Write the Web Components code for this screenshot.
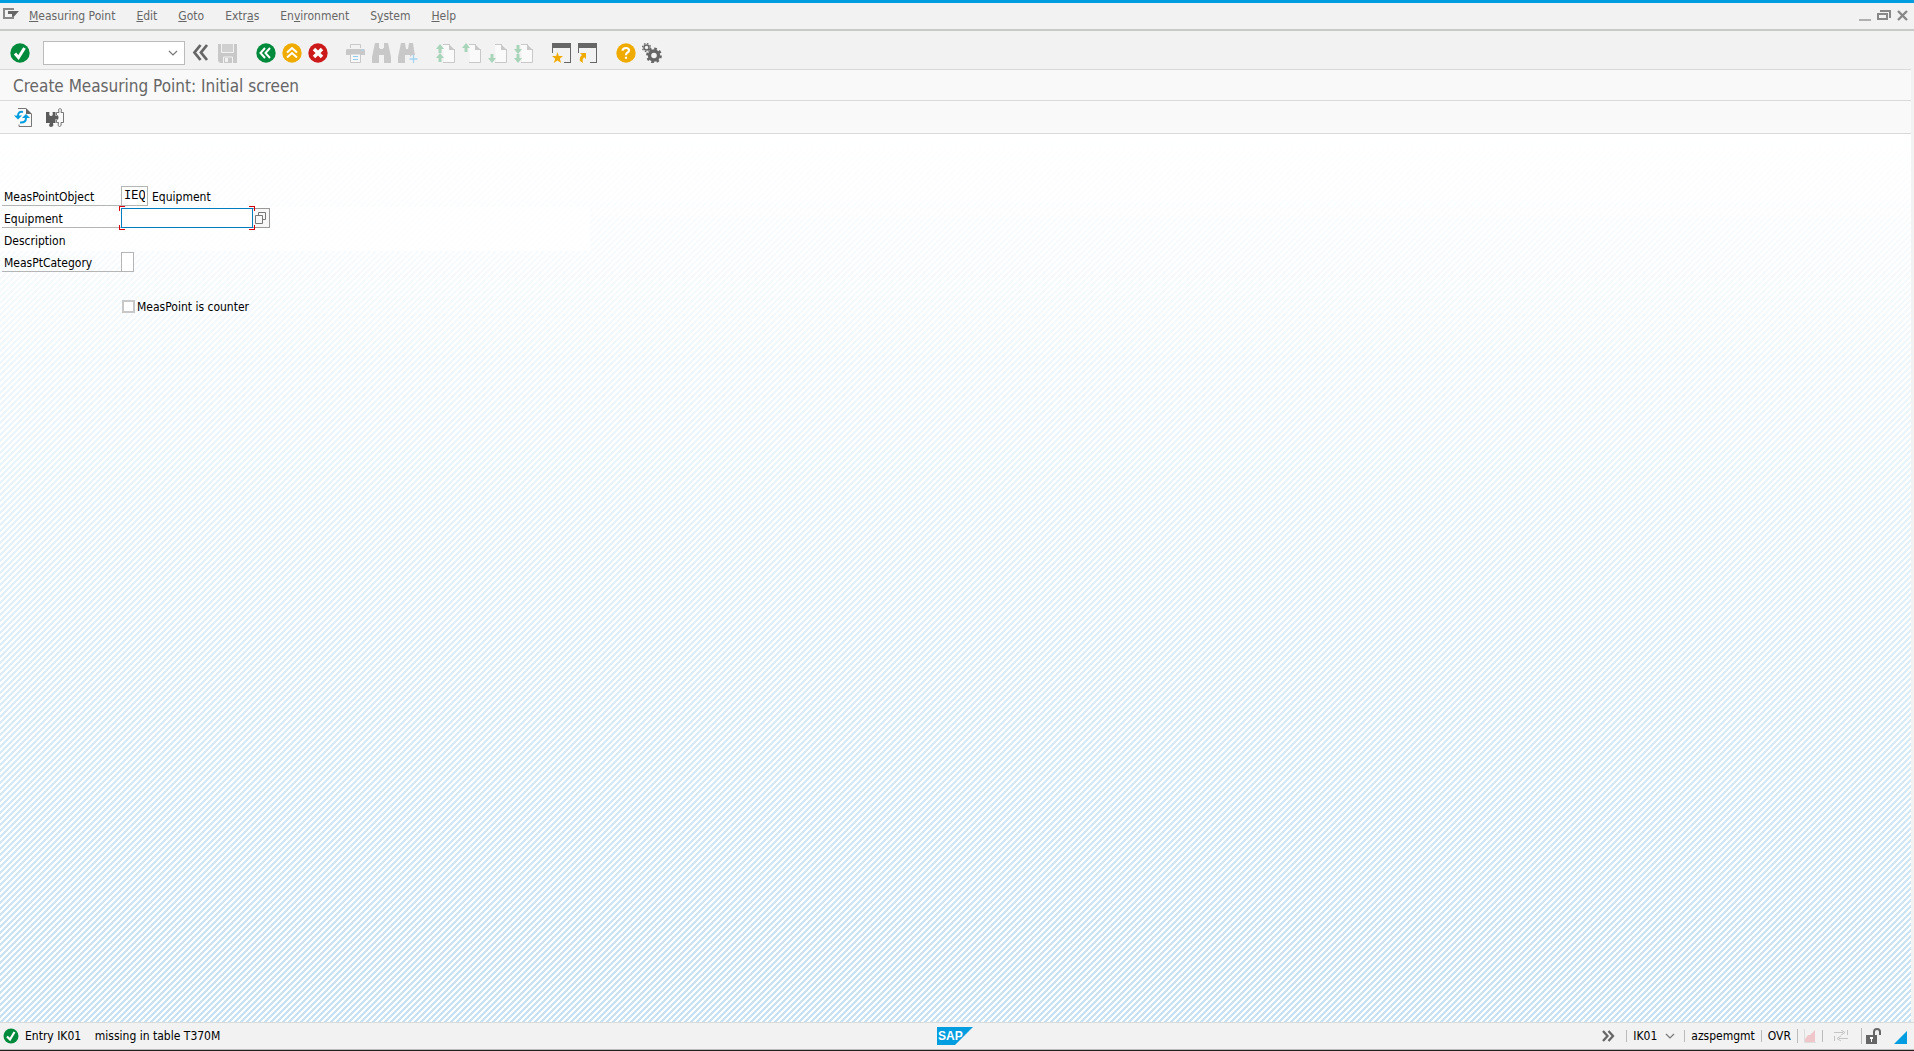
<!DOCTYPE html>
<html lang="en">
<head>
<meta charset="utf-8">
<title>Create Measuring Point: Initial screen</title>
<style>
	html, body { margin: 0; height: 100%; }
	body {
		font: 12px/16px "DejaVu Sans Condensed", Tahoma, sans-serif;
		color: #000;
		background: #f0f0f0;
	}
</style>
</head>
<body>
<gui-window>
	<menu-bar slot="menu">
		<menu-entry><u>M</u>easuring Point</menu-entry>
		<menu-entry><u>E</u>dit</menu-entry>
		<menu-entry><u>G</u>oto</menu-entry>
		<menu-entry>Extr<u>a</u>s</menu-entry>
		<menu-entry>En<u>v</u>ironment</menu-entry>
		<menu-entry>S<u>y</u>stem</menu-entry>
		<menu-entry><u>H</u>elp</menu-entry>
	</menu-bar>
	<system-toolbar slot="toolbar"></system-toolbar>
	<screen-title slot="toolbar">Create Measuring Point: Initial screen</screen-title>
	<app-toolbar slot="toolbar">
		<icon-button icon="refresh" label="Refresh"></icon-button>
		<icon-button icon="puzzle" label="Class assignment"></icon-button>
	</app-toolbar>
	<point-form></point-form>
	<status-bar slot="status">Entry IK01    missing in table T370M</status-bar>
</gui-window>

<script>
const page = (left, top) => `
	<path d="M${left} ${top}H14L19 6V19.500H${left + 1}" fill="#fafafa" stroke="none"/>
	<path d="M${left} 1.500H14M18.500 6V19.500H${left}" fill="none" stroke="#c8c8c8"/>
	<path d="M13 1L19 7H13z" fill="#c8c8c8"/>`;
const up = (x, y) => `<path d="M${x} ${y}l4 5h-2.500v4h-3v-4H${x - 4}z" fill="#a8d5ba"/>`;
const down = (x, y) => `<path d="M${x} ${y}l4-5h-2.500v-4h-3v4H${x - 4}z" fill="#a8d5ba"/>`;
const windowShape = `<path d="M0 0H19V20H12V19H18V5H1V10H0z" fill="#666"/>`;

// name: [width, height, markup]
const ICONS = {
	ok: [20, 20, `<circle cx="10" cy="10" r="9.700" fill="#008a3b"/>
		<path d="M5 10.500l3.500 4L14.500 5" fill="none" stroke="#fff" stroke-width="3"/>`],
	okSmall: [16, 16, `<circle cx="8" cy="8" r="7.500" fill="#008a3b"/>
		<path d="M4 8.500l3 3L11.500 4" fill="none" stroke="#fff" stroke-width="2.200"/>`],
	collapse: [20, 20, `<path d="M8.500 2L2.500 9.500L8.500 17M15 2L9 9.500L15 17" fill="none" stroke="#666" stroke-width="2.800"/>`],
	save: [20, 20, `<path d="M0 1H19V20H2L0 18z" fill="#c8c8c8"/><path d="M4 1H15V9H4z" fill="#d0d0d0"/>
		<path d="M3.500 1V9.500H15.500V1M5.500 20v-6h9v6" fill="none" stroke="#f2f2f2"/><path d="M7 15h3v4H7z" fill="#f2f2f2"/>`],
	back: [20, 20, `<circle cx="10" cy="10" r="9.700" fill="#008a3b"/>
		<path d="M9 5L4.500 10l4.500 5M14 5L9.500 10l4.500 5" fill="none" stroke="#fff" stroke-width="2"/>`],
	exit: [20, 20, `<circle cx="10" cy="10" r="9.700" fill="#f0ab00"/>
		<path d="M5 9.500L10 5l5 4.500M5 14.500L10 10l5 4.500" fill="none" stroke="#fff" stroke-width="2"/>`],
	cancel: [20, 20, `<circle cx="10" cy="10" r="9.700" fill="#cc1919"/>
		<path d="M6 6l8 8M14 6l-8 8" fill="none" stroke="#fff" stroke-width="3.500"/>`],
	print: [20, 20, `<path d="M4.500 5V1.500h10V5" fill="none" stroke="#c8c8c8"/><path d="M1 6h17l1 1v5H0V7z" fill="#c8c8c8"/>
		<path d="M15 7h3" stroke="#a9d5ee"/><path d="M4.500 11v8.500h10V11z" fill="#f7f7f7" stroke="#c8c8c8"/>
		<path d="M7 13.500h5M7 16.500h5" stroke="#8fcdf0"/>`],
	find: [20, 20, `<path d="M3 0h4l1 6h3l1-6h4l3 14v6H12v-8H7v8H0v-6z" fill="#c8c8c8"/>
		<path d="M7.500 5V0M11.500 5V0" stroke="#f2f2f2"/>`],
	findNext: [20, 20, `<path d="M3 0h4l1 6h2l1-6h4l1 7 1 5h-3l-2 2v-2H7v8H0v-6z" fill="#c8c8c8"/>
		<path d="M15.500 12v8M11.500 16h8" stroke="#a2d5f2" stroke-width="1.300"/>`],
	firstPage: [20, 20, page(7, 1) + up(4, 1) + up(4, 10)],
	prevPage: [20, 20, page(7, 1) + up(4, 0)],
	nextPage: [20, 20, page(7, 1) + down(4, 20)],
	lastPage: [20, 20, page(7, 1) + down(4, 11) + down(4, 20)],
	newSession: [20, 20, windowShape + `<path d="M5.500 9l1.300 4H11l-3.200 2.700L9.200 20l-3.700-2.600L1.700 20l1.500-4.300L0 13h4.200z" fill="#f0ab00"/>`],
	shortcut: [20, 20, windowShape + `<path d="M2 10h6v6L6.200 14.200Q4 16 5 20L2 18Q1 14.500 4 12z" fill="#f0ab00"/>`],
	help: [20, 20, `<circle cx="10" cy="10" r="9.700" fill="#f0ab00"/>
		<path d="M6.500 7.700Q6.800 5 10 5q3 0 3 2.500 0 1.300-1.800 2.300Q10 10.500 10 12.300M10 13.700v2" fill="none" stroke="#fff" stroke-width="2.200"/>`],
	gear: [20, 20, `<circle cx="12" cy="12.500" r="4.500" fill="none" stroke="#666" stroke-width="3.400"/>
		<circle cx="12" cy="12.500" r="6.800" fill="none" stroke="#666" stroke-width="2.200" stroke-dasharray="2.670"/>
		<circle cx="4.500" cy="4.500" r="2.500" fill="none" stroke="#666" stroke-width="1.500"/>
		<circle cx="4.500" cy="4.500" r="4" fill="none" stroke="#666" stroke-width="1.200" stroke-dasharray="1.570"/>`],
	refresh: [20, 20, `<path d="M4 1.500h8M17.500 7v12.500H5v-2" fill="none" stroke="#777"/><path d="M12 1l6 6h-6z" fill="#666"/>
		<path d="M9 5Q4 4 4 9M6 15.500Q12 16 12 11" fill="none" stroke="#009de0" stroke-width="2"/>
		<path d="M0 8.500h8L4 12.500zM8 11h8L12 7z" fill="#009de0"/>`],
	puzzle: [20, 20, `<path d="M0 5h3.500q-1 4 1.500 4t1.500-4H9.500v4q3-2 3 1.500T9.500 12v4H7q0 1 .5 2-.5 2-2.500 2t-2-2l1-2H0z" fill="#5c5c5c"/>
		<path d="M10.500 8V5.500h2.500Q11.500 1.500 14 1.500T15 5.500h2.500v10H15q1 4-1.500 4t-1-4H10.500V13" fill="none" stroke="#777"/>`],
	menu: [16, 18, `<path d="M0 1H11V3H2V10H9V8H11V12H0z" fill="#888"/><path d="M5 4H16L11 9.500H9V7H5z" fill="#666"/>`],
	minimize: [12, 12, `<path d="M0 10h12" stroke="#b0b0b0" stroke-width="2"/>`],
	restore: [14, 12, `<path d="M1 4h9v5H1zM3 1h10v7" fill="none" stroke="#888" stroke-width="2"/>`],
	close: [12, 12, `<path d="M1 1l9 9M10 1l-9 9" stroke="#888" stroke-width="2.400"/>`],
	chevron: [10, 8, `<path d="M1 2l4 4 4-4" fill="none" stroke="#777" stroke-width="1.200"/>`],
	match: [12, 12, `<path d="M.5 3.500h7v8h-7zM3.500 3V.5h7v7H8" fill="none" stroke="#777"/>`],
	expand: [14, 12, `<path d="M1 1l4.500 5L1 11M6.500 1L11 6l-4.500 5" fill="none" stroke="#666" stroke-width="2.300"/>`],
	load: [12, 14, `<path d="M.5 0v13.500H12" fill="none" stroke="#ddd"/><path d="M1 10L4 6h2l5-5v12H1z" fill="#efc7ca"/>`],
	transfer: [16, 12, `<path d="M1 2.500h9M15 8.500H6M14.500 0v5M1.500 6v5" fill="none" stroke="#c4c4c4"/>
		<path d="M8 0l4 2.500L8 5M8 6L4 8.500 8 11" fill="none" stroke="#c4c4c4"/>`],
	lock: [16, 16, `<path d="M0 7h11v9H0z" fill="#666"/><path d="M8 7V4Q8 1 11 1t3 3v3" fill="none" stroke="#666" stroke-width="2"/>
		<path d="M4 9h3v2H6v3H5v-3H4z" fill="#fff"/>`],
	grip: [13, 13, `<path d="M13 0V13H0z" fill="#009de0"/>`],
	sap: [36, 18, `<path d="M0 0H36L18 18H0z" fill="#009de0"/>
		<text x="1" y="13" font-family="Liberation Sans, Arial, sans-serif" font-weight="bold" font-size="12" fill="#fff">SAP</text>`],
};

const svg = name => {
	const [w, h, body] = ICONS[name];
	return `<svg width="${w}" height="${h}" viewBox="0 0 ${w} ${h}" aria-hidden="true">${body}</svg>`;
};

const define = (tag, render) => customElements.define(tag, class extends HTMLElement {
	constructor() {
		super();
		this.attachShadow({ mode: "open" });
	}

	connectedCallback() {
		this.shadowRoot.innerHTML = render(this);
	}
});

define("icon-button", el => `
	<style>
		:host { display: block; }
		button { display: block; padding: 0; border: 0; background: none; }
		svg { display: block; }
	</style>
	<button type="button" aria-label="${el.getAttribute("label")}">${svg(el.getAttribute("icon"))}</button>
`);

define("gui-window", () => `
	<style>
		:host {
			display: flex;
			flex-direction: column;
			box-sizing: border-box;
			min-height: 100vh;
			border-top: 3px solid #009de0;
			border-bottom: 1px solid #222;
			background: #f2f2f2;
		}
		.work {
			flex: 1;
			display: flex;
			flex-direction: column;
			margin-right: 3px;
		}
		main {
			flex: 1;
			background:
				linear-gradient(#fff, rgba(255, 255, 255, 0)),
				linear-gradient(135deg, #c5e1f3 25%, #fff 25% 50%, #c5e1f3 50% 75%, #fff 75%) 0 0 / 6px 6px;
		}
	</style>
	<slot name="menu"></slot>
	<div class="work">
		<slot name="toolbar"></slot>
		<main><slot></slot></main>
	</div>
	<slot name="status"></slot>
`);

define("menu-entry", () => `
	<style>
		:host { display: block; }
		button { padding: 0; border: 0; background: none; font: inherit; color: #666; }
	</style>
	<button type="button"><slot></slot></button>
`);

define("menu-bar", () => `
	<style>
		:host {
			display: flex;
			align-items: center;
			height: 26px;
			padding: 0 5px 0 3px;
			border-bottom: 2px solid #c8cac8;
		}
		nav { flex: 1; display: flex; gap: 21px; margin-left: 10px; }
		.controls { display: flex; gap: 6px; }
	</style>
	<icon-button icon="menu" label="Menu"></icon-button>
	<nav><slot></slot></nav>
	<div class="controls">
		<icon-button icon="minimize" label="Minimize"></icon-button>
		<icon-button icon="restore" label="Restore"></icon-button>
		<icon-button icon="close" label="Close"></icon-button>
	</div>
`);

const group = items => `<div class="group">${items.map(([icon, label]) =>
	`<icon-button icon="${icon}" label="${label}"></icon-button>`).join("")}</div>`;

define("system-toolbar", () => `
	<style>
		:host {
			display: flex;
			align-items: center;
			gap: 18px;
			height: 32px;
			padding: 6px 10px 0;
			border-bottom: 1px solid #dadada;
		}
		.group { display: flex; align-items: center; gap: 6px; }
		.command {
			display: flex;
			align-items: center;
			box-sizing: border-box;
			width: 142px;
			height: 24px;
			margin: 0 1px 0 7px;
			padding-right: 6px;
			border: 1px solid #bbb;
			background: #fff;
		}
		input { flex: 1; min-width: 0; border: 0; padding: 0 4px; background: none; font: inherit; outline: 0; }
	</style>
	<div class="group">
		<icon-button icon="ok" label="Enter"></icon-button>
		<div class="command">
			<input type="text" aria-label="Command">
			<icon-button icon="chevron" label="Command history"></icon-button>
		</div>
		<icon-button icon="collapse" label="Hide command field"></icon-button>
		<icon-button icon="save" label="Save"></icon-button>
	</div>
	${group([["back", "Back"], ["exit", "Exit"], ["cancel", "Cancel"]])}
	${group([["print", "Print"], ["find", "Find"], ["findNext", "Find next"]])}
	${group([["firstPage", "First page"], ["prevPage", "Previous page"], ["nextPage", "Next page"], ["lastPage", "Last page"]])}
	${group([["newSession", "New session"], ["shortcut", "Create shortcut"]])}
	${group([["help", "Help"], ["gear", "Customize layout"]])}
`);

define("screen-title", () => `
	<style>
		:host { display: block; padding: 4px 13px 2px; border-bottom: 1px solid #dadada; background: #f9f9f9; }
		h1 { margin: 0; font-size: 17px; line-height: 24px; font-weight: normal; color: #666; }
	</style>
	<h1><slot></slot></h1>
`);

define("app-toolbar", () => `
	<style>
		:host {
			display: flex;
			align-items: center;
			gap: 12px;
			height: 32px;
			padding: 0 14px;
			border-bottom: 1px solid #dadada;
			background: #f9f9f9;
		}
	</style>
	<slot></slot>
`);

define("point-form", () => `
	<style>
		:host { display: block; padding-top: 51px; }
		.row { display: flex; align-items: center; height: 22px; padding-left: 2px; }
		.label {
			box-sizing: border-box;
			width: 119px;
			height: 20px;
			padding: 3px 2px 0;
			border-bottom: 1px solid #b5b5b5;
		}
		.text { padding-top: 2px; }
		.plain { border-color: transparent; }
		.soft { max-width: 588px; background: rgba(255, 255, 255, .7); }
		input[type="text"] {
			box-sizing: border-box;
			height: 20px;
			border: 1px solid #b5b5b5;
			padding: 0 2px;
			background: #fff;
			font: 12px/16px "Liberation Mono", "Courier New", monospace;
			outline: 0;
		}
		.type { width: 27px; margin-right: 4px; }
		.category { width: 13px; }
		.focus { position: relative; display: flex; }
		.focus input { width: 132px; border-color: #007cc0; }
		/* red brackets round the field that has the cursor */
		.focus i { position: absolute; width: 5px; height: 4px; border: 0 solid #d9000d; }
		.focus .tl { left: -2px; top: -2px; border-width: 1px 0 0 1px; }
		.focus .tr { right: -2px; top: -2px; border-width: 1px 1px 0 0; }
		.focus .bl { left: -2px; bottom: -2px; border-width: 0 0 1px 1px; }
		.focus .br { right: -2px; bottom: -2px; border-width: 0 1px 1px 0; }
		.f4 {
			display: flex;
			align-items: center;
			box-sizing: border-box;
			width: 17px;
			height: 20px;
			padding-left: 2px;
			border: 1px solid #999;
			border-left: 0;
			background: #f7f7f7;
		}
		.check { margin: 22px 0 0 122px; padding: 0; gap: 2px; }
		input[type="checkbox"] {
			appearance: none;
			box-sizing: border-box;
			width: 13px;
			height: 13px;
			margin: 0;
			border: 2px solid #c8c8c8;
			background: #fff;
		}
	</style>
	<form>
		<div class="row">
			<label class="label" for="type">MeasPointObject</label>
			<input class="type" id="type" type="text" value="IEQ">
			<span class="text">Equipment</span>
		</div>
		<div class="row soft">
			<label class="label" for="equipment">Equipment</label>
			<div class="focus">
				<input id="equipment" type="text">
				<i class="tl"></i><i class="tr"></i><i class="bl"></i><i class="br"></i>
			</div>
			<div class="f4"><icon-button icon="match" label="Search equipment"></icon-button></div>
		</div>
		<div class="row soft"><span class="label plain">Description</span></div>
		<div class="row">
			<label class="label" for="category">MeasPtCategory</label>
			<input class="category" id="category" type="text">
		</div>
		<div class="row check">
			<input id="counter" type="checkbox">
			<label class="text" for="counter">MeasPoint is counter</label>
		</div>
	</form>
`);

define("status-bar", () => `
	<style>
		:host {
			display: grid;
			grid-template-columns: 1fr auto 1fr;
			align-items: center;
			height: 26px;
			padding: 0 7px 0 3px;
			border-top: 1px solid #dadada;
			border-bottom: 1px solid #bbb;
		}
		svg { display: block; }
		.message { display: flex; align-items: center; gap: 6px; white-space: pre; }
		.info { display: flex; align-items: center; justify-content: flex-end; gap: 6px; }
		.info > span, .info > .cell { border-left: 1px solid #bbb; padding-left: 6px; line-height: 12px; }
		.cell { display: flex; align-items: center; gap: 8px; min-height: 12px; }
		.first { margin-left: 4px; padding-right: 3px; }
		.info > .transfer { padding-left: 10px; padding-right: 6px; }
		.info > .security { padding-left: 4px; }
		.grip { align-self: end; margin-left: 6px; }
	</style>
	<div class="message">${svg("okSmall")}<span><slot></slot></span></div>
	${svg("sap")}
	<div class="info">
		<icon-button icon="expand" label="Hide status fields"></icon-button>
		<div class="cell first">IK01<icon-button icon="chevron" label="System information"></icon-button></div>
		<span>azspemgmt</span>
		<span>OVR</span>
		<div class="cell">${svg("load")}</div>
		<div class="cell transfer">${svg("transfer")}</div>
		<div class="cell security"><icon-button icon="lock" label="Security"></icon-button></div>
		<div class="grip">${svg("grip")}</div>
	</div>
`);
</script>
</body>
</html>
